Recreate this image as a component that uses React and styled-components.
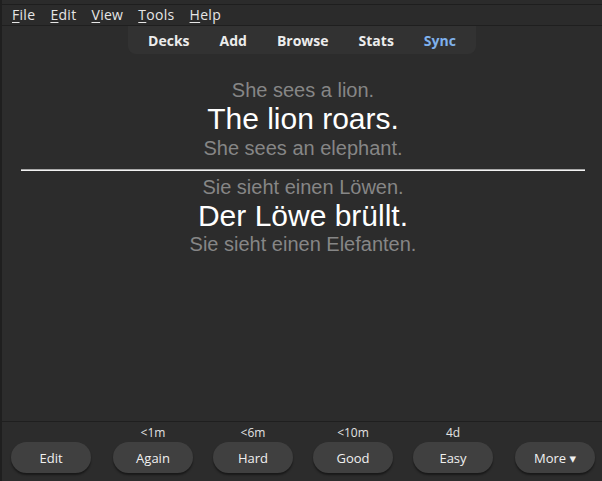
import React from 'react';
import styled, { createGlobalStyle } from 'styled-components';

const GlobalStyle = createGlobalStyle`
  *, *::before, *::after {
    box-sizing: border-box;
  }
  html, body {
    margin: 0;
    padding: 0;
    background: #2c2c2c;
  }
  #root {
    height: 481px;
  }
`;

const Window = styled.div`
  height: 481px;
  display: flex;
  flex-direction: column;
  background: #2c2c2c;
  border-left: 2px solid #1f1f1f;
  font-family: "Open Sans", "DejaVu Sans", sans-serif;
  overflow: hidden;
`;

const TopEdge = styled.div`
  height: 5px;
  background: #2b2b2b;
  border-bottom: 1px solid #1e1e1e;
`;

const MenuBar = styled.div`
  height: 21px;
  display: flex;
  align-items: center;
  padding-left: 10px;
  gap: 15px;
  background: #2b2b2b;
  border-bottom: 1px solid #1f1f1f;
`;

const MenuItem = styled.span`
  color: #e6e6e6;
  font-size: 14px;
  line-height: 18px;
  letter-spacing: 0.3px;

  u {
    text-decoration: underline;
    text-underline-offset: 2px;
  }
`;

const ToolbarRow = styled.div`
  display: flex;
  justify-content: center;
`;

const Toolbar = styled.nav`
  display: flex;
  align-items: center;
  height: 28px;
  padding: 0 5px;
  background: #323232;
  border-radius: 0 0 8px 8px;
`;

const ToolLink = styled.span`
  padding: 0 15px;
  font-size: 14px;
  font-weight: 700;
  color: ${p => (p.$accent ? '#7fb1ec' : '#ececec')};
`;

const Card = styled.main`
  flex: 1;
  padding: 25px 17px 0 19px;
  text-align: center;
  font-family: "Liberation Sans", Arial, sans-serif;
`;

const Line = styled.div`
  font-size: ${p => (p.$big ? '30px' : '20px')};
  color: ${p => (p.$big ? '#ffffff' : '#868686')};
  line-height: 1.15;
`;

const Rule = styled.hr`
  margin: 9px 0 5px;
  border: none;
  border-top: 1px solid #a8a8a8;
  border-bottom: 1px solid #f2f2f2;
`;

const BottomBar = styled.footer`
  height: 60px;
  border-top: 1px solid #1f1f1f;
  display: flex;
  justify-content: space-between;
  align-items: flex-end;
  padding: 0 7px 8px 9px;
`;

const AnswerGroup = styled.div`
  display: flex;
  gap: 20px;
`;

const Slot = styled.div`
  display: flex;
  flex-direction: column;
  align-items: center;
  gap: 2px;
`;

const Due = styled.span`
  font-size: 12px;
  line-height: 15px;
  color: #e2e2e2;
`;

const Button = styled.button`
  width: 80px;
  height: 31px;
  border: none;
  border-radius: 16px;
  background: #404040;
  box-shadow: 0 2px 2px rgba(0, 0, 0, 0.45);
  color: #f0f0f0;
  font-family: inherit;
  font-size: 13px;
  font-weight: 500;
  cursor: pointer;
`;

const menus = ['File', 'Edit', 'View', 'Tools', 'Help'];
const links = ['Decks', 'Add', 'Browse', 'Stats', 'Sync'];
const answers = [
  { label: 'Again', due: '<1m' },
  { label: 'Hard', due: '<6m' },
  { label: 'Good', due: '<10m' },
  { label: 'Easy', due: '4d' },
];

export default function App() {
  return (
    <>
      <GlobalStyle />
      <Window>
        <TopEdge />
        <MenuBar>
          {menus.map(m => (
            <MenuItem key={m}>
              <u>{m[0]}</u>
              {m.slice(1)}
            </MenuItem>
          ))}
        </MenuBar>
        <ToolbarRow>
          <Toolbar>
            {links.map(l => (
              <ToolLink key={l} $accent={l === 'Sync'}>{l}</ToolLink>
            ))}
          </Toolbar>
        </ToolbarRow>
        <Card>
          <Line>She sees a lion.</Line>
          <Line $big>The lion roars.</Line>
          <Line>She sees an elephant.</Line>
          <Rule />
          <Line>Sie sieht einen Löwen.</Line>
          <Line $big>Der Löwe brüllt.</Line>
          <Line>Sie sieht einen Elefanten.</Line>
        </Card>
        <BottomBar>
          <Button>Edit</Button>
          <AnswerGroup>
            {answers.map(a => (
              <Slot key={a.label}>
                <Due>{a.due}</Due>
                <Button>{a.label}</Button>
              </Slot>
            ))}
          </AnswerGroup>
          <Button>More ▾</Button>
        </BottomBar>
      </Window>
    </>
  );
}
